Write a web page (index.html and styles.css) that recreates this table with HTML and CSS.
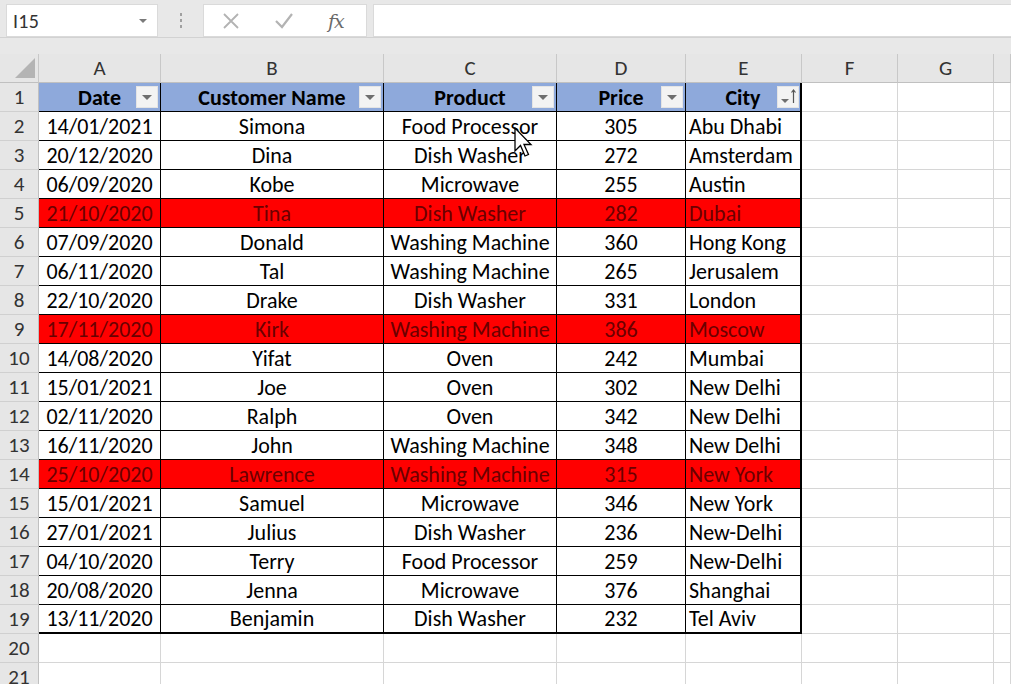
FILE: index.html
```html
<!DOCTYPE html>
<html>
<head>
<meta charset="utf-8">
<link rel="stylesheet" href="styles.css">
</head>
<body>
<div class="toolbar">
  <div class="namebox"><span class="ref">I15</span><span class="nb-arrow"></span></div>
  <div class="dots"><i></i><i></i><i></i></div>
  <div class="fbtns">
    <svg class="ico-x" width="18" height="18" viewBox="0 0 18 18"><path d="M2 2 L16 16 M16 2 L2 16" stroke="#b3b3b3" stroke-width="1.8" fill="none"/></svg>
    <svg class="ico-ok" width="20" height="18" viewBox="0 0 20 18"><path d="M2 9 L8 15 L18 2" stroke="#b3b3b3" stroke-width="2.2" fill="none"/></svg>
    <span class="fx">fx</span>
  </div>
  <div class="finput"></div>
</div>

<div class="sheet">
  <div class="row colhead">
    <div class="corner"><span class="tri"></span></div>
    <div class="ch">A</div><div class="ch">B</div><div class="ch">C</div><div class="ch">D</div><div class="ch">E</div><div class="ch">F</div><div class="ch">G</div><div class="ch last-ch"></div>
  </div>

  <div class="row">
    <div class="rh">1</div>
    <div class="c t hd">Date<span class="fbtn"><span class="dn"></span></span></div>
    <div class="c t hd">Customer Name<span class="fbtn"><span class="dn"></span></span></div>
    <div class="c t hd">Product<span class="fbtn"><span class="dn"></span></span></div>
    <div class="c t hd">Price<span class="fbtn"><span class="dn"></span></span></div>
    <div class="c t hd e">City<span class="fbtn sort"><span class="dn sm"></span><svg class="up" width="5" height="14" viewBox="0 0 5 14"><path d="M2.5 1 V14 M0.5 3.5 L2.5 1 L4.5 3.5" stroke="#555" stroke-width="1.2" fill="none"/></svg></span></div>
    <div class="c"></div><div class="c"></div><div class="c"></div>
  </div>

  <div class="row"><div class="rh">2</div><div class="c t">14/01/2021</div><div class="c t">Simona</div><div class="c t">Food Processor</div><div class="c t">305</div><div class="c t e l">Abu Dhabi</div><div class="c"></div><div class="c"></div><div class="c"></div></div>
  <div class="row"><div class="rh">3</div><div class="c t">20/12/2020</div><div class="c t">Dina</div><div class="c t">Dish Washer</div><div class="c t">272</div><div class="c t e l">Amsterdam</div><div class="c"></div><div class="c"></div><div class="c"></div></div>
  <div class="row"><div class="rh">4</div><div class="c t">06/09/2020</div><div class="c t">Kobe</div><div class="c t">Microwave</div><div class="c t">255</div><div class="c t e l">Austin</div><div class="c"></div><div class="c"></div><div class="c"></div></div>
  <div class="row red"><div class="rh">5</div><div class="c t">21/10/2020</div><div class="c t">Tina</div><div class="c t">Dish Washer</div><div class="c t">282</div><div class="c t e l">Dubai</div><div class="c"></div><div class="c"></div><div class="c"></div></div>
  <div class="row"><div class="rh">6</div><div class="c t">07/09/2020</div><div class="c t">Donald</div><div class="c t">Washing Machine</div><div class="c t">360</div><div class="c t e l">Hong Kong</div><div class="c"></div><div class="c"></div><div class="c"></div></div>
  <div class="row"><div class="rh">7</div><div class="c t">06/11/2020</div><div class="c t">Tal</div><div class="c t">Washing Machine</div><div class="c t">265</div><div class="c t e l">Jerusalem</div><div class="c"></div><div class="c"></div><div class="c"></div></div>
  <div class="row"><div class="rh">8</div><div class="c t">22/10/2020</div><div class="c t">Drake</div><div class="c t">Dish Washer</div><div class="c t">331</div><div class="c t e l">London</div><div class="c"></div><div class="c"></div><div class="c"></div></div>
  <div class="row red"><div class="rh">9</div><div class="c t">17/11/2020</div><div class="c t">Kirk</div><div class="c t">Washing Machine</div><div class="c t">386</div><div class="c t e l">Moscow</div><div class="c"></div><div class="c"></div><div class="c"></div></div>
  <div class="row"><div class="rh">10</div><div class="c t">14/08/2020</div><div class="c t">Yifat</div><div class="c t">Oven</div><div class="c t">242</div><div class="c t e l">Mumbai</div><div class="c"></div><div class="c"></div><div class="c"></div></div>
  <div class="row"><div class="rh">11</div><div class="c t">15/01/2021</div><div class="c t">Joe</div><div class="c t">Oven</div><div class="c t">302</div><div class="c t e l">New Delhi</div><div class="c"></div><div class="c"></div><div class="c"></div></div>
  <div class="row"><div class="rh">12</div><div class="c t">02/11/2020</div><div class="c t">Ralph</div><div class="c t">Oven</div><div class="c t">342</div><div class="c t e l">New Delhi</div><div class="c"></div><div class="c"></div><div class="c"></div></div>
  <div class="row"><div class="rh">13</div><div class="c t">16/11/2020</div><div class="c t">John</div><div class="c t">Washing Machine</div><div class="c t">348</div><div class="c t e l">New Delhi</div><div class="c"></div><div class="c"></div><div class="c"></div></div>
  <div class="row red"><div class="rh">14</div><div class="c t">25/10/2020</div><div class="c t">Lawrence</div><div class="c t">Washing Machine</div><div class="c t">315</div><div class="c t e l">New York</div><div class="c"></div><div class="c"></div><div class="c"></div></div>
  <div class="row"><div class="rh">15</div><div class="c t">15/01/2021</div><div class="c t">Samuel</div><div class="c t">Microwave</div><div class="c t">346</div><div class="c t e l">New York</div><div class="c"></div><div class="c"></div><div class="c"></div></div>
  <div class="row"><div class="rh">16</div><div class="c t">27/01/2021</div><div class="c t">Julius</div><div class="c t">Dish Washer</div><div class="c t">236</div><div class="c t e l">New-Delhi</div><div class="c"></div><div class="c"></div><div class="c"></div></div>
  <div class="row"><div class="rh">17</div><div class="c t">04/10/2020</div><div class="c t">Terry</div><div class="c t">Food Processor</div><div class="c t">259</div><div class="c t e l">New-Delhi</div><div class="c"></div><div class="c"></div><div class="c"></div></div>
  <div class="row"><div class="rh">18</div><div class="c t">20/08/2020</div><div class="c t">Jenna</div><div class="c t">Microwave</div><div class="c t">376</div><div class="c t e l">Shanghai</div><div class="c"></div><div class="c"></div><div class="c"></div></div>
  <div class="row lastrow"><div class="rh">19</div><div class="c t">13/11/2020</div><div class="c t">Benjamin</div><div class="c t">Dish Washer</div><div class="c t">232</div><div class="c t e l">Tel Aviv</div><div class="c"></div><div class="c"></div><div class="c"></div></div>
  <div class="row"><div class="rh">20</div><div class="c"></div><div class="c"></div><div class="c"></div><div class="c"></div><div class="c"></div><div class="c"></div><div class="c"></div><div class="c"></div></div>
  <div class="row partial"><div class="rh">21</div><div class="c"></div><div class="c"></div><div class="c"></div><div class="c"></div><div class="c"></div><div class="c"></div><div class="c"></div><div class="c"></div></div>

  <svg class="cursor" width="20" height="31" viewBox="0 0 20 31"><path d="M1 1 L1 24 L6.5 18.5 L11 29 L14.5 27.5 L10 17.5 L17 17.5 Z" fill="#fff" stroke="#000" stroke-width="1.3" stroke-linejoin="miter"/></svg>
</div>
</body>
</html>
```

FILE: styles.css
```css
* { box-sizing: border-box; }
html, body { margin: 0; padding: 0; }
body {
  width: 1011px;
  height: 684px;
  overflow: hidden;
  background: #e8e8e8;
  font-family: "Carlito", "Lato", "Liberation Sans", sans-serif;
  color: #000;
}

.toolbar {
  height: 38px;
  display: flex;
  align-items: flex-start;
  padding: 4px 0 0 6px;
  border-bottom: 1px solid #d2d2d2;
}
.namebox {
  width: 152px;
  height: 33px;
  background: #fff;
  border: 1px solid #dadada;
  display: flex;
  align-items: center;
  justify-content: space-between;
  padding: 0 10px 0 6px;
}
.ref { font-size: 20px; color: #333; letter-spacing: 0.3px; }
.nb-arrow {
  width: 0; height: 0;
  border-left: 4px solid transparent;
  border-right: 4px solid transparent;
  border-top: 4px solid #7a7a7a;
}
.dots {
  width: 45px;
  height: 33px;
  display: flex;
  flex-direction: column;
  align-items: center;
  justify-content: center;
  gap: 3px;
}
.dots i { display: block; width: 2px; height: 3px; background: #a0a0a0; }
.fbtns {
  width: 164px;
  height: 33px;
  background: #fff;
  border: 1px solid #dadada;
  display: flex;
  align-items: center;
  padding-left: 18px;
}
.ico-x { margin-right: 34px; }
.ico-ok { margin-right: 34px; }
.fx {
  font-family: "DejaVu Serif", "Liberation Serif", serif;
  font-style: italic;
  font-size: 19px;
  color: #6a6a6a;
  letter-spacing: -1px;
}
.finput {
  margin-left: 6px;
  flex: 1;
  height: 33px;
  background: #fff;
  border: 1px solid #dadada;
  border-right: none;
}

.sheet {
  position: relative;
  margin-top: 16px;
  background: #fff;
}
.row {
  display: grid;
  grid-template-columns: 39px 122px 223px 173px 129px 116px 96px 96px 1fr;
  height: 29px;
  font-size: 22px;
}
.row.partial { height: 22px; align-items: start; }
.row > div {
  border-right: 1px solid #d6d6d6;
  border-bottom: 1px solid #d6d6d6;
  display: flex;
  align-items: center;
  justify-content: center;
  white-space: nowrap;
  overflow: hidden;
}
.row.partial > div { height: 29px; }
.colhead { background: #e8e8e8; font-size: 21px; }
.colhead > div {
  background: #e6e6e6;
  color: #333;
  border-right-color: #c8c8c8;
  border-bottom-color: #c0c0c0;
}
.corner { position: relative; }
.tri {
  position: absolute;
  right: 3px;
  bottom: 4px;
  width: 0; height: 0;
  border-left: 20px solid transparent;
  border-bottom: 20px solid #b4b4b4;
}
.rh {
  background: #e6e6e6;
  color: #333;
  font-size: 21px;
  border-right-color: #c0c0c0 !important;
  border-bottom-color: #d0d0d0 !important;
}
.row > .t { border-right-color: #000; border-bottom-color: #000; }
.row > .e { border-right: 2px solid #000; }
.row > .l { justify-content: flex-start; padding-left: 3px; }
.lastrow > .t { border-bottom: 2px solid #000; }

.hd {
  background: #8ea9db;
  font-weight: bold;
  position: relative;
}
.fbtn {
  position: absolute;
  right: 2px;
  top: 3px;
  width: 22px;
  height: 22px;
  background: #f3f3f3;
  border: 1px solid #e4e4e4;
  display: flex;
  align-items: center;
  justify-content: center;
}
.dn {
  width: 0; height: 0;
  border-left: 5px solid transparent;
  border-right: 5px solid transparent;
  border-top: 5px solid #6e6e6e;
}
.fbtn.sort { right: 1px; justify-content: flex-start; padding-left: 3px; gap: 2px; align-items: flex-end; padding-bottom: 4px; }
.dn.sm { border-left-width: 4px; border-right-width: 4px; border-top-width: 4px; }

.red > .t { background: #ff0000; color: #6b0000; }

.cursor {
  position: absolute;
  left: 514px;
  top: 73px;
}
```
